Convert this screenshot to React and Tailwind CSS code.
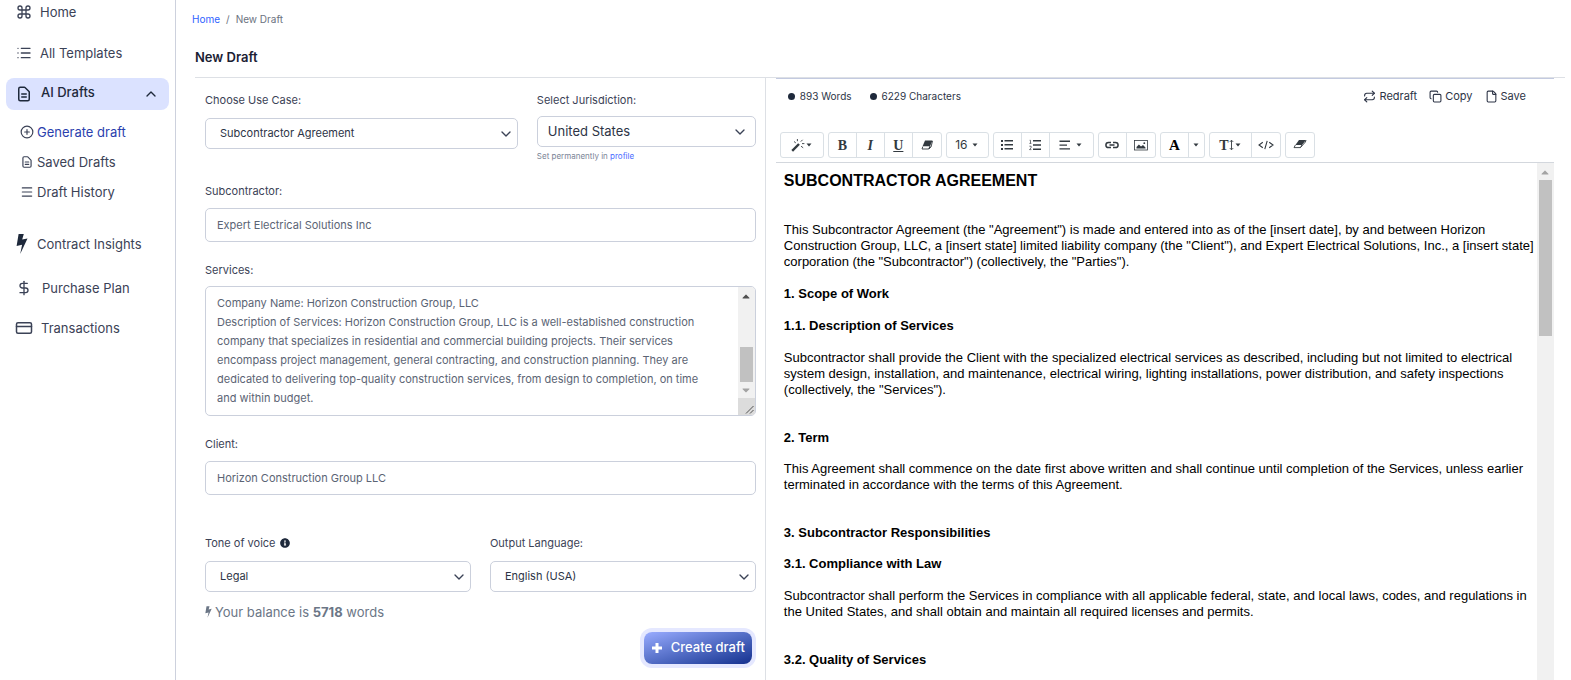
import React, { useState } from 'react';
import { ChevronDown, ChevronUp, CirclePlus, Command, Copy, CreditCard, DollarSign, File, List, Menu, Repeat } from 'lucide-react';
import { HiOutlineDocumentText } from 'react-icons/hi';
import { FaCaretDown, FaInfoCircle } from 'react-icons/fa';

const SERVICES = `Company Name: Horizon Construction Group, LLC
Description of Services: Horizon Construction Group, LLC is a well-established construction company that specializes in residential and commercial building projects. Their services encompass project management, general contracting, and construction planning. They are dedicated to delivering top-quality construction services, from design to completion, on time and within budget.`;

const BoltIcon = ({ className }) => (
  <svg viewBox="0 0 12 20" fill="currentColor" className={className} aria-hidden="true">
    <path d="M2.6 0h5.2L6.2 5.6l5.3-1.1L4.2 20l1.9-9.3L.6 12z" />
  </svg>
);

const PlusIcon = () => (
  <svg viewBox="0 0 12 12" fill="currentColor" className="h-3 w-3" aria-hidden="true">
    <path d="M4.5 1h3v3.5H11v3H7.5V11h-3V7.5H1v-3h3.5z" />
  </svg>
);

const WandIcon = () => (
  <svg viewBox="0 0 14 14" className="h-[14px] w-[14px]" fill="none" stroke="currentColor" aria-hidden="true">
    <path d="M1.2 12.8 8 6" strokeWidth="2.4" />
    <path d="m3 3.5 1.8 1.4M6.4 1v2.2M11.6 1.8 9.8 3.6M11 5.6h2.4M10 8.2l2.2 1.6" strokeWidth="0.9" />
  </svg>
);

const BulletsIcon = () => (
  <svg viewBox="0 0 12 12" className="h-3 w-3" fill="currentColor" aria-hidden="true">
    <path d="M0 1h2v2H0zM0 5h2v2H0zM0 9h2v2H0zM3.5 1H12v1.6H3.5zM3.5 5H12v1.6H3.5zM3.5 9H12v1.6H3.5z" />
  </svg>
);

const NumbersIcon = () => (
  <svg viewBox="0 0 12 12" className="h-3 w-3" aria-hidden="true">
    <path d="M4 1h8v1.5H4zM4 5.2h8v1.5H4zM4 9.4h8v1.5H4z" fill="currentColor" />
    <path d="M.6 1.3h.9v3M.4 4.4h2M.4 7.2h1.7v1.6L.5 10.6h1.9" fill="none" stroke="currentColor" strokeWidth="0.7" />
  </svg>
);

const AlignIcon = () => (
  <svg viewBox="0 0 12 12" className="h-3 w-3" fill="currentColor" aria-hidden="true">
    <path d="M.5 1.6h10.5V3H.5zM.5 5.4H8v1.4H.5zM.5 9.2h10.5v1.4H.5z" />
  </svg>
);

const LinkIcon = () => (
  <svg viewBox="0 0 14 14" className="h-[14px] w-[14px]" fill="none" stroke="currentColor" strokeWidth="1.5" aria-hidden="true">
    <path d="M6 4.4H3.5a2.6 2.6 0 0 0 0 5.2H6M8 4.4h2.5a2.6 2.6 0 0 1 0 5.2H8M4.5 7h5" />
  </svg>
);

const PictureIcon = () => (
  <svg viewBox="0 0 14 14" className="h-[14px] w-[14px]" aria-hidden="true">
    <rect x="0.5" y="2.5" width="13" height="9.5" fill="none" stroke="currentColor" strokeWidth="0.8" />
    <path d="M2.5 10.5V9l2.4-2.6L7 8.6l2-1.6 2.5 2.4v1.1z" fill="currentColor" />
    <circle cx="10.3" cy="5.2" r="0.9" fill="currentColor" />
  </svg>
);

const CodeIcon = () => (
  <svg viewBox="0 0 16 12" className="h-3 w-4" fill="none" stroke="currentColor" strokeWidth="1.1" aria-hidden="true">
    <path d="M4.8 3.2 1 6l3.8 2.8M11.2 3.2 15 6l-3.8 2.8M9.2 1.8 6.8 10.2" />
  </svg>
);

const HeightIcon = () => (
  <svg viewBox="0 0 5 12" className="h-3 w-[5px]" fill="none" stroke="currentColor" strokeWidth="0.9" aria-hidden="true">
    <path d="M2.5 1.4v9.2M.8 2.9l1.7-1.7 1.7 1.7M.8 9.1l1.7 1.7 1.7-1.7" />
  </svg>
);

const RemoveStyleIcon = () => (
  <svg viewBox="0 0 12 12" className="h-3 w-3" aria-hidden="true">
    <path d="M4 1.5h7.5L9 7.2H1.6z" fill="currentColor" />
    <path d="M1.8 7.6 1 10h6.8l1-2.4M9 7.2l-1 2.6 2-1.8 1.5-6" fill="none" stroke="currentColor" strokeWidth="0.9" />
  </svg>
);

const ClearIcon = () => (
  <svg viewBox="0 0 14 12" className="h-3 w-[14px]" aria-hidden="true">
    <path d="M6 1h7L9 6H2.4z" fill="currentColor" />
    <path d="M2.4 6 1 8.6h6.4L9 6M7.4 8.6 12.4 3 13 1" fill="none" stroke="currentColor" strokeWidth="0.9" />
  </svg>
);

const NavLink = ({ icon, children, className }) => (
  <a href="#" className={`flex items-center text-[13px] leading-5 text-[#3b4256] ${className}`}>
    {icon}
    <span>{children}</span>
  </a>
);

const Sidebar = () => (
  <aside className="w-44 shrink-0 border-r border-[#cdd1dd] bg-white">
    <nav className="flex flex-col">
      <NavLink className="gap-2 pt-0.5 pl-4" icon={<Command className="h-4 w-4" />}>Home</NavLink>
      <NavLink className="mt-[21px] gap-2 pl-4" icon={<List className="h-4 w-4" />}>All Templates</NavLink>
      <a href="#" className="mx-1.5 mt-[15px] flex h-8 items-center rounded-lg bg-[#dbe2ff] pr-2.5 pl-[9px] text-[13px] font-medium text-[#1e293b]">
        <HiOutlineDocumentText className="h-[18px] w-[18px]" />
        <span className="-mt-0.5 ml-2 flex-1">AI Drafts</span>
        <ChevronUp className="h-4 w-4" />
      </a>
      <NavLink className="mt-3 gap-[3px] pl-5" icon={<CirclePlus className="h-[14px] w-[14px]" />}>
        <span className="text-[#2b3fae]">Generate draft</span>
      </NavLink>
      <NavLink className="mt-2.5 gap-[3px] pl-5" icon={<HiOutlineDocumentText className="h-[14px] w-[14px]" />}>Saved Drafts</NavLink>
      <NavLink className="mt-2.5 gap-[3px] pl-5" icon={<Menu className="h-[14px] w-[14px]" />}>Draft History</NavLink>
      <NavLink className="mt-8 gap-[9px] pl-4" icon={<BoltIcon className="h-5 w-3 text-[#1e293b]" />}>Contract Insights</NavLink>
      <NavLink className="mt-6 gap-2.5 pl-4" icon={<DollarSign className="h-4 w-4" />}>Purchase Plan</NavLink>
      <NavLink className="mt-5 gap-2 pl-[15px]" icon={<CreditCard className="h-[18px] w-[18px]" />}>Transactions</NavLink>
    </nav>
  </aside>
);

const SelectField = ({ id, label, value, large, icon, children }) => (
  <div className="flex flex-col">
    <label htmlFor={id} className="flex items-center gap-1 text-[11px] leading-4 text-[#3b4256]">
      {label}
      {icon}
    </label>
    <div className={`relative ${large ? 'mt-2' : 'mt-2.5'}`}>
      <select
        id={id}
        defaultValue={value}
        className={`h-[31px] w-full appearance-none rounded-[5px] border border-[#cbd0dc] bg-white pr-8 ${large ? 'pl-2.5 text-[13px] text-[#2d3446]' : 'pl-[14px] text-[11px] text-[#2d3446]'}`}
      >
        <option>{value}</option>
      </select>
      <ChevronDown className={`pointer-events-none absolute top-2 h-4 w-4 text-[#3b4256] ${large ? 'right-2' : 'right-1'}`} />
    </div>
    {children}
  </div>
);

const TextField = ({ id, label, value }) => (
  <div className="flex flex-col gap-[9px]">
    <label htmlFor={id} className="text-[11px] leading-4 text-[#3b4256]">{label}</label>
    <input
      id={id}
      type="text"
      defaultValue={value}
      className="h-[34px] w-full rounded-[5px] border border-[#cbd0dc] px-[11px] text-[11px] text-[#5b6474]"
    />
  </div>
);

const DraftForm = () => {
  const [services, setServices] = useState(SERVICES);

  return (
    <form className="flex flex-col pt-[14px] pr-[9px] pl-2.5" onSubmit={(e) => e.preventDefault()}>
      <div className="grid grid-cols-[10fr_7fr] gap-[19px]">
        <SelectField id="use-case" label="Choose Use Case:" value="Subcontractor Agreement" />
        <SelectField id="jurisdiction" label="Select Jurisdiction:" value="United States" large>
          <p className="mt-[3px] text-[8px] leading-3 text-[#7b8496]">
            Set permanently in <a href="#" className="text-[#4a6cff]">profile</a>
          </p>
        </SelectField>
      </div>

      <div className="mt-[21px]">
        <TextField id="subcontractor" label="Subcontractor:" value="Expert Electrical Solutions Inc" />
      </div>

      <div className="mt-5 flex flex-col gap-2">
        <label htmlFor="services" className="text-[11px] leading-4 text-[#3b4256]">Services:</label>
        <div className="flex h-[130px] overflow-hidden rounded-[5px] border border-[#cbd0dc]">
          <textarea
            id="services"
            value={services}
            onChange={(e) => setServices(e.target.value)}
            className="flex-1 resize-none overflow-hidden pt-[7px] pr-9 pl-[11px] text-[11px] leading-[19px] text-[#5b6474]"
          />
          <div className="flex w-[17px] flex-col items-center bg-[#f1f1f1]" aria-hidden="true">
            <FaCaretDown className="mt-1 h-3 w-3 rotate-180 text-[#505050]" />
            <div className="mt-auto h-[35px] w-[13px] bg-[#c1c1c1]" />
            <FaCaretDown className="my-0.5 h-3 w-3 text-[#a3a3a3]" />
            <svg viewBox="0 0 17 17" className="h-[17px] w-[17px] bg-[#dcdcdc]" stroke="#505050">
              <path d="M8 15.5 15.5 8M12 15.5 15.5 12" />
            </svg>
          </div>
        </div>
      </div>

      <div className="mt-5">
        <TextField id="client" label="Client:" value="Horizon Construction Group LLC" />
      </div>

      <div className="mt-10 grid grid-cols-2 gap-[19px]">
        <SelectField id="tone" label="Tone of voice" value="Legal" icon={<FaInfoCircle className="h-2.5 w-2.5 text-[#1e293b]" />} />
        <SelectField id="language" label="Output Language:" value="English (USA)" />
      </div>

      <p className="mt-2.5 flex items-center gap-[3px] text-[13px] leading-5 text-[#6b7686]">
        <BoltIcon className="h-3 w-[7px]" />
        <span>Your balance is <b className="font-bold">5718</b> words</span>
      </p>

      <button
        type="submit"
        className="mt-2.5 mr-1 flex h-8 items-center gap-2 self-end rounded-lg bg-gradient-to-br from-[#9aacff] to-[#15308f] px-[7px] text-[13px] font-medium text-white ring-4 ring-[#e5e8ff]"
      >
        <PlusIcon />
        Create draft
      </button>
    </form>
  );
};

const Group = ({ children }) => (
  <div className="flex divide-x divide-[#dae0e5] overflow-hidden rounded-[3px] border border-[#dae0e5]">{children}</div>
);

const Tool = ({ label, className = 'w-7', children }) => (
  <button type="button" aria-label={label} className={`flex h-6 items-center justify-center text-[#333a40] ${className}`}>
    {children}
  </button>
);

const Caret = () => (
  <svg viewBox="0 0 8 8" className="h-2 w-2" fill="currentColor" aria-hidden="true">
    <path d="M1.5 2.5h5L4 5.5z" />
  </svg>
);

const Toolbar = () => (
  <div className="flex flex-wrap gap-1 border-b border-[#d3d7dd] px-1 pb-1">
    <Group>
      <Tool label="Style" className="w-[42px]"><WandIcon /><Caret /></Tool>
    </Group>
    <Group>
      <Tool label="Bold"><span className="font-['Liberation_Serif',serif] text-[14px] font-bold">B</span></Tool>
      <Tool label="Italic"><span className="font-['Liberation_Serif',serif] text-[14px] font-bold italic">I</span></Tool>
      <Tool label="Underline"><span className="font-['Liberation_Serif',serif] text-[14px] font-bold underline">U</span></Tool>
      <Tool label="Remove style"><RemoveStyleIcon /></Tool>
    </Group>
    <Group>
      <Tool label="Font size" className="w-[41px] gap-1 text-[12px]">16 <Caret /></Tool>
    </Group>
    <Group>
      <Tool label="Unordered list"><BulletsIcon /></Tool>
      <Tool label="Ordered list"><NumbersIcon /></Tool>
      <Tool label="Paragraph" className="w-[43px] gap-1"><AlignIcon /><Caret /></Tool>
    </Group>
    <Group>
      <Tool label="Link"><LinkIcon /></Tool>
      <Tool label="Picture"><PictureIcon /></Tool>
    </Group>
    <Group>
      <Tool label="Text color"><span className="font-['Liberation_Serif',serif] text-[15px] font-bold text-black">A</span></Tool>
      <Tool label="More colors" className="w-[15px]"><Caret /></Tool>
    </Group>
    <Group>
      <Tool label="Line height" className="w-[42px]">
        <span className="font-['Liberation_Serif',serif] text-[14px] font-bold">T</span><HeightIcon /><Caret />
      </Tool>
      <Tool label="Code view"><CodeIcon /></Tool>
    </Group>
    <Group>
      <Tool label="Clear"><ClearIcon /></Tool>
    </Group>
  </div>
);

const Document = () => (
  <article className="flex-1 overflow-hidden pt-2 pl-2 font-['Liberation_Sans',Arial,sans-serif] text-[13px] leading-4 text-black">
    <h1 className="text-[16px] leading-5 font-bold">SUBCONTRACTOR AGREEMENT</h1>
    <p className="mt-[31px]">
      This Subcontractor Agreement (the "Agreement") is made and entered into as of the [insert date], by and between Horizon Construction Group, LLC, a [insert state] limited liability company (the "Client"), and Expert Electrical Solutions, Inc., a [insert state] corporation (the "Subcontractor") (collectively, the "Parties").
    </p>
    <h2 className="mt-4 font-bold">1. Scope of Work</h2>
    <h3 className="mt-4 font-bold">1.1. Description of Services</h3>
    <p className="mt-4">
      Subcontractor shall provide the Client with the specialized electrical services as described, including but not limited to electrical system design, installation, and maintenance, electrical wiring, lighting installations, power distribution, and safety inspections (collectively, the "Services").
    </p>
    <h2 className="mt-8 font-bold">2. Term</h2>
    <p className="mt-[15px]">
      This Agreement shall commence on the date first above written and shall continue until completion of the Services, unless earlier terminated in accordance with the terms of this Agreement.
    </p>
    <h2 className="mt-8 font-bold">3. Subcontractor Responsibilities</h2>
    <h3 className="mt-[15px] font-bold">3.1. Compliance with Law</h3>
    <p className="mt-4">
      Subcontractor shall perform the Services in compliance with all applicable federal, state, and local laws, codes, and regulations in the United States, and shall obtain and maintain all required licenses and permits.
    </p>
    <h3 className="mt-8 font-bold">3.2. Quality of Services</h3>
  </article>
);

const Editor = () => (
  <section className="flex min-h-0 flex-1 flex-col border-t border-[#c3cae0]">
    <div className="flex items-center justify-between pt-2 pr-7 pl-3 text-[#2d3446]">
      <div className="flex gap-[18px] text-[10px] leading-[18px]">
        <span className="flex items-center gap-[5px]"><i className="h-[7px] w-[7px] rounded-full bg-[#1e293b]" />893 Words</span>
        <span className="flex items-center gap-[5px]"><i className="h-[7px] w-[7px] rounded-full bg-[#1e293b]" />6229 Characters</span>
      </div>
      <div className="flex gap-3 text-[11px] leading-[18px]">
        <button type="button" className="flex items-center gap-[3px]"><Repeat className="h-[13px] w-[13px]" />Redraft</button>
        <button type="button" className="flex items-center gap-[3px]"><Copy className="h-[13px] w-[13px]" />Copy</button>
        <button type="button" className="flex items-center gap-[3px]"><File className="h-[13px] w-[13px]" />Save</button>
      </div>
    </div>
    <div className="mt-[27px]">
      <Toolbar />
    </div>
    <div className="flex min-h-0 flex-1">
      <Document />
      <div className="flex w-[17px] flex-col items-center bg-[#f1f1f1]" aria-hidden="true">
        <FaCaretDown className="mt-1 h-3 w-3 rotate-180 text-[#a3a3a3]" />
        <div className="mt-px h-[156px] w-[13px] bg-[#c1c1c1]" />
      </div>
    </div>
  </section>
);

const App = () => (
  <div className="flex h-screen overflow-hidden bg-white font-['Inter',sans-serif]">
    <Sidebar />
    <main className="flex min-w-0 flex-1 flex-col pr-1.5 pl-4">
      <div className="flex gap-1.5 pt-[9px] text-[10px] leading-5 text-[#6b7280]">
        <a href="#" className="text-[#2f62ff]">Home</a>
        <span>/</span>
        <span>New Draft</span>
      </div>
      <div className="ml-[3px] flex min-h-0 flex-1 flex-col">
        <h1 className="mt-[18px] border-b border-[#dde0e5] pb-[10px] text-[13px] leading-5 font-semibold text-[#1b2133]">New Draft</h1>
        <div className="grid min-h-0 flex-1 grid-cols-12">
          <div className="col-span-5 border-r border-[#dde0e5]">
            <DraftForm />
          </div>
          <div className="col-span-7 flex min-h-0 flex-col pr-[11px] pl-2.5">
            <Editor />
          </div>
        </div>
      </div>
    </main>
  </div>
);

export default App;
